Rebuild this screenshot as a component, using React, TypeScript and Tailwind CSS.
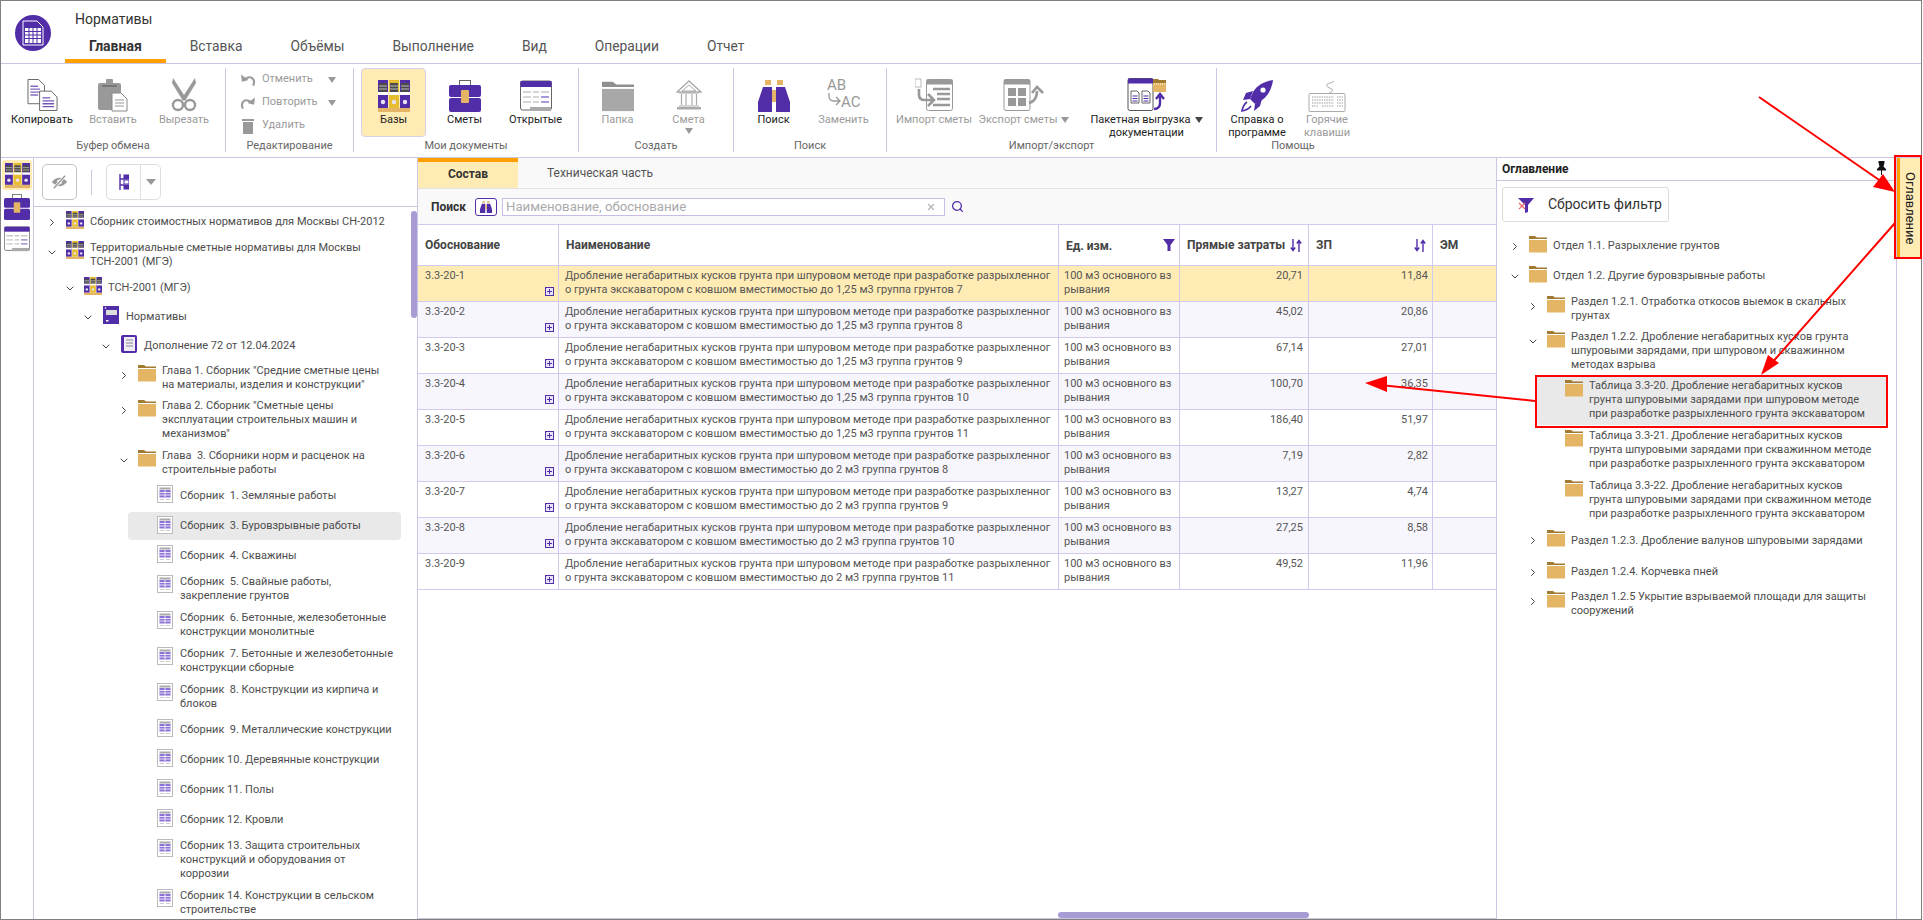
import { ChevronDown, ChevronRight, Search, X } from "lucide-react";

const PURPLE = "#512da8";
const GREY = "#999999";

function Binders({ s = 32 }: { s?: number }) {
  return (
    <svg width={s} height={s} viewBox="0 0 32 32">
      {[0, 11, 22].map((x, i) => (
        <g key={x}>
          <rect x={x} y="0" width="10" height="28" fill={i === 1 ? "#e6bd2e" : PURPLE} />
          <rect x={x + 1} y="3" width="8" height="9" fill="#4a4a4a" />
          <rect x={x + 1} y="5.5" width="8" height="1" fill="#bbbbbb" />
          <rect x={x + 1} y="8.5" width="8" height="1" fill="#bbbbbb" />
          <rect x={x} y="12" width="10" height="3" fill="#ffffff" />
          <circle cx={x + 5} cy="22" r="2.2" fill="#e9e4f5" />
        </g>
      ))}
      <rect x="0" y="28" width="32" height="4" fill="#e5b566" />
    </svg>
  );
}

function Briefcase({ s = 32 }: { s?: number }) {
  return (
    <svg width={s} height={s} viewBox="0 0 32 32">
      <rect x="10.5" y="0.5" width="11" height="6" fill="none" stroke="#666" />
      <rect x="0" y="5" width="32" height="12" rx="2" fill={PURPLE} />
      <rect x="0" y="18" width="32" height="14" rx="2" fill={PURPLE} />
      <rect x="12" y="10" width="8" height="13" rx="1" fill="#e5b566" />
    </svg>
  );
}

function Opened({ s = 32 }: { s?: number }) {
  return (
    <svg width={s} height={s} viewBox="0 0 32 32">
      <rect x="0.5" y="1" width="31" height="29" rx="2" fill="#fff" stroke="#666" />
      <rect x="0.5" y="1" width="31" height="6" fill={PURPLE} />
      <path d="M3 12h8M13 12h6M21 12h8M3 17h8M13 17h6M3 22h8M13 22h6" stroke="#c8c8c8" strokeWidth="1.6" />
      <path d="M21 17h8M21 22h8" stroke="#8f78cc" strokeWidth="1.6" />
      <rect x="10" y="27" width="21" height="4" fill="#aaa" />
    </svg>
  );
}

function Copy() {
  return (
    <svg width="31" height="34" viewBox="0 0 32 34">
      <path d="M1 1h11l6 6v19H1z" fill="#fff" stroke="#666" />
      <path d="M3.5 8h8M3.5 11h10M3.5 14h10M3.5 17h8" stroke={PURPLE} strokeWidth="1.4" opacity="0.7" />
      <path d="M13 13h12l6 6v14H13z" fill="#fff" stroke="#666" />
      <path d="M16 20h8M16 23h12M16 26h12M16 29h12" stroke={PURPLE} strokeWidth="1.4" opacity="0.8" />
    </svg>
  );
}

function Paste() {
  return (
    <svg width="30" height="34" viewBox="0 0 30 34">
      <rect x="0" y="5" width="23" height="27" rx="2" fill={GREY} />
      <rect x="8" y="1" width="7" height="7" rx="1" fill={GREY} />
      <rect x="4" y="7" width="15" height="2" fill="#777" />
      <path d="M14 15h9l6 6v12H14z" fill="#fff" stroke="#888" />
      <path d="M17 22h9M17 25h9M17 28h9" stroke="#bbb" strokeWidth="1.5" />
    </svg>
  );
}

function Scissors() {
  return (
    <svg width="26" height="34" viewBox="0 0 26 34">
      <path d="M2 0l13 20-3 3L1 5z" fill={GREY} />
      <path d="M24 0L11 20l3 3L25 5z" fill={GREY} />
      <circle cx="7" cy="27" r="5" fill="none" stroke={GREY} strokeWidth="2.4" />
      <circle cx="19" cy="27" r="5" fill="none" stroke={GREY} strokeWidth="2.4" />
    </svg>
  );
}

function Folder({ s = 18, color = "#e5b566", tab = "#a07a30" }: { s?: number; color?: string; tab?: string }) {
  return (
    <svg width={s} height={s} viewBox="0 0 18 18">
      <path d="M0 1h6l2 1.5h10V4H0z" fill={tab} />
      <rect x="0" y="5" width="18" height="12.5" fill={color} />
    </svg>
  );
}

function Bank() {
  return (
    <svg width="26" height="32" viewBox="0 0 26 32" fill="none" stroke="#aaaaaa">
      <path d="M13 1L1 12h24z" strokeWidth="1.4" />
      <path d="M13 5L6 11h14z" strokeWidth="1" />
      <path d="M3 13h20M3 26h20" strokeWidth="1.2" />
      <path d="M5.5 14v11M10 14v11M16 14v11M20.5 14v11" strokeWidth="1.2" />
      <rect x="1" y="27" width="24" height="2.5" fill="#aaaaaa" stroke="none" />
    </svg>
  );
}

function Binoculars({ s = 32 }: { s?: number }) {
  return (
    <svg width={s} height={s} viewBox="0 0 32 32">
      <rect x="7" y="0" width="6" height="5" fill="#e5b566" />
      <rect x="19" y="0" width="6" height="5" fill="#e5b566" />
      <path d="M5 7h9v25H0V22z" fill={PURPLE} />
      <path d="M27 7h-9v25h14V22z" fill={PURPLE} />
      <rect x="14" y="10" width="4" height="12" fill="#e5b566" />
    </svg>
  );
}

function Replace() {
  return (
    <svg width="34" height="36" viewBox="0 0 34 36">
      <text x="0" y="14" fontSize="15" fill={GREY} fontFamily="Roboto">AB</text>
      <text x="14" y="31" fontSize="15" fill={GREY} fontFamily="Roboto">AC</text>
      <path d="M2 17v3q0 5 5 5h6M9 21l4 4-4 4" fill="none" stroke={GREY} strokeWidth="1.3" />
    </svg>
  );
}

function ImportIcon() {
  return (
    <svg width="38" height="34" viewBox="0 0 38 34">
      <rect x="0" y="1" width="6" height="8" fill="#fff" stroke="#bbb" />
      <rect x="11.5" y="1.5" width="26" height="31" rx="2" fill="#fff" stroke={GREY} />
      <rect x="11.5" y="1.5" width="26" height="5" fill={GREY} />
      <path d="M18 11h17M22 16h13M22 21h13M18 27h17" stroke={GREY} strokeWidth="2.4" />
      <path d="M4 11v6q0 5 6 5h8M13 16l6 6-6 6" fill="none" stroke={GREY} strokeWidth="2.6" />
    </svg>
  );
}

function ExportIcon() {
  return (
    <svg width="42" height="34" viewBox="0 0 42 34">
      <rect x="1" y="1.5" width="26" height="31" rx="2" fill="#fff" stroke={GREY} />
      <rect x="1" y="1.5" width="26" height="5" fill={GREY} />
      <rect x="5" y="10" width="8" height="8" fill={GREY} />
      <rect x="15" y="10" width="8" height="8" fill={GREY} />
      <rect x="5" y="20" width="8" height="8" fill={GREY} />
      <rect x="15" y="20" width="8" height="8" fill={GREY} />
      <path d="M26 25q8-2 8-12M29 15l5-6 6 6" fill="none" stroke={GREY} strokeWidth="2.6" />
    </svg>
  );
}

function BatchIcon() {
  return (
    <svg width="40" height="34" viewBox="0 0 40 34">
      <rect x="1" y="0.5" width="25" height="32" rx="2" fill="#fff" stroke="#555" />
      <rect x="1" y="0.5" width="25" height="5" fill={PURPLE} />
      <path d="M4 13h6l2 2v10H4zM15 13h6l2 2v10h-8z" fill="#fff" stroke="#666" />
      <path d="M5.5 18h5M5.5 20.5h5M5.5 23h5M16.5 18h5M16.5 20.5h5M16.5 23h5" stroke={PURPLE} strokeWidth="1.2" />
      <path d="M26 1h5l1 1h7v3H26z" fill="#a07a30" />
      <rect x="26" y="5" width="13" height="9" fill="#e5b566" />
      <path d="M27 6h11" stroke="#fff" strokeDasharray="1 1" />
      <path d="M27 31q6 0 6-6v-7M29 21l4-5 4 5" fill="none" stroke={PURPLE} strokeWidth="2.4" />
    </svg>
  );
}

function Rocket() {
  return (
    <svg width="32" height="32" viewBox="0 0 32 32">
      <path d="M32 0C24 1 16 5 12 12l-3 7 5 5 7-4C27 16 31 8 32 0z" fill={PURPLE} />
      <path d="M12 11l-7 2-3 7 7-1zM21 19l-2 7-6 5 1-7z" fill={PURPLE} />
      <circle cx="22" cy="10" r="2.6" fill="#fff" />
      <path d="M6 22q-4 3-5 9q6-1 9-5" fill="none" stroke={PURPLE} strokeWidth="1.6" />
    </svg>
  );
}

function Keyboard() {
  return (
    <svg width="38" height="32" viewBox="0 0 38 32">
      <path d="M26 1c-3 3-9 2-7 5s7 2 5 5q-1 2-3 2" fill="none" stroke="#aaa" />
      <rect x="1" y="13.5" width="36" height="18" rx="1" fill="#fff" stroke="#aaa" />
      <path d="M4 17h22M4 20h22M4 23h22M4 26h6M14 26h12M29 17h6M29 20h6M29 23h6M29 26h6" stroke="#bbb" strokeWidth="1.6" strokeDasharray="1.4 1" />
    </svg>
  );
}

function SortArrows() {
  return (
    <svg width="12" height="13" viewBox="0 0 12 13" fill="none" stroke={PURPLE} strokeWidth="1.4">
      <path d="M3 0v11M0.8 8.5L3 11.5l2.2-3" />
      <path d="M9 13V2M6.8 4.5L9 1.5l2.2 3" />
    </svg>
  );
}

function Tri({ c = GREY }: { c?: string }) {
  return <span className="inline-block w-0 h-0 border-l-[4.5px] border-r-[4.5px] border-t-[6px] border-l-transparent border-r-transparent" style={{ borderTopColor: c }} />;
}

function DocLines() {
  return (
    <svg width="16" height="18" viewBox="0 0 16 18">
      <rect x="0.5" y="0.5" width="15" height="17" fill="#fff" stroke="#bbb" />
      <rect x="2.5" y="2.5" width="11" height="2" fill="#aaa" />
      <rect x="2.5" y="5" width="11" height="7.5" fill="#8c72d6" />
      <path d="M2.5 7.5h11M2.5 10h11M8 5v7.5" stroke="#fff" strokeWidth="0.8" />
      <path d="M3 14.5h4M9 14.5h4" stroke="#ccc" />
    </svg>
  );
}

function BookIcon() {
  return (
    <svg width="16" height="18" viewBox="0 0 16 18">
      <rect x="0" y="0" width="16" height="18" rx="2" fill={PURPLE} />
      <rect x="3" y="2" width="11" height="14" fill="#efecf8" />
      <path d="M5 5h7M5 8h7M5 11h7" stroke="#888" strokeWidth="1.2" />
    </svg>
  );
}

function ServerIcon() {
  return (
    <svg width="16" height="18" viewBox="0 0 16 18">
      <rect x="0" y="0" width="16" height="18" fill={PURPLE} />
      <rect x="3" y="4" width="11" height="5" fill="#ddd" />
      <circle cx="2.5" cy="2" r="0.8" fill="#fff" />
      <rect x="3" y="14" width="2.5" height="1.5" fill="#fff" />
    </svg>
  );
}

type IconKind = "binders" | "server" | "book" | "folder" | "doc";
type Node = { level: number; open?: boolean; icon: IconKind; h: number; lines: string[]; sel?: boolean; mt?: number };

function TreeIcon({ kind }: { kind: IconKind }) {
  if (kind === "binders") return <Binders s={18} />;
  if (kind === "server") return <ServerIcon />;
  if (kind === "book") return <BookIcon />;
  if (kind === "folder") return <Folder />;
  return <DocLines />;
}

function TreeRow({ n, hlLeft, hlRightClass }: { n: Node; hlLeft: number; hlRightClass: string }) {
  const pad = 12 + 18 * n.level;
  return (
    <div
      className={"flex items-start shrink-0 " + (n.sel ? "bg-[#e9e9e9] rounded-sm " + hlRightClass : "")}
      style={{ height: n.h, paddingLeft: n.sel ? pad - hlLeft : pad, marginLeft: n.sel ? hlLeft : 0, marginTop: n.mt ?? 0 }}
    >
      <div className="w-[12px] h-[14px] mt-[8px] flex items-center justify-center text-[#444] shrink-0">
        {n.open === true && <ChevronDown size={13} strokeWidth={2} />}
        {n.open === false && <ChevronRight size={13} strokeWidth={2} />}
      </div>
      <div className="w-[18px] h-[18px] ml-[8px] mt-[4px] flex justify-center shrink-0">
        <TreeIcon kind={n.icon} />
      </div>
      <div className="ml-[6px] self-stretch flex flex-col justify-center text-[11px] leading-[14px] text-[#4d4d4d] whitespace-pre">
        {n.lines.map((l) => (
          <div key={l}>{l}</div>
        ))}
      </div>
    </div>
  );
}

const leftTree: Node[] = [
  { level: 0, open: false, icon: "binders", h: 30, lines: ["Сборник стоимостных нормативов для Москвы СН-2012"] },
  { level: 0, open: true, icon: "binders", h: 36, lines: ["Территориальные сметные нормативы для Москвы", "ТСН-2001 (МГЭ)"] },
  { level: 1, open: true, icon: "binders", h: 29, lines: ["ТСН-2001 (МГЭ)"] },
  { level: 2, open: true, icon: "server", h: 29, lines: ["Нормативы"] },
  { level: 3, open: true, icon: "book", h: 29, lines: ["Дополнение 72 от 12.04.2024"] },
  { level: 4, open: false, icon: "folder", h: 35, lines: ['Глава 1. Сборник "Средние сметные цены', 'на материалы, изделия и конструкции"'] },
  { level: 4, open: false, icon: "folder", h: 50, lines: ['Глава 2. Сборник "Сметные цены', "эксплуатации строительных машин и", 'механизмов"'] },
  { level: 4, open: true, icon: "folder", h: 36, lines: ["Глава  3. Сборники норм и расценок на", "строительные работы"] },
  { level: 5, icon: "doc", h: 29, lines: ["Сборник  1. Земляные работы"] },
  { level: 5, icon: "doc", h: 28, mt: 2, sel: true, lines: ["Сборник  3. Буровзрывные работы"] },
  { level: 5, icon: "doc", h: 30, mt: 1, lines: ["Сборник  4. Скважины"] },
  { level: 5, icon: "doc", h: 36, lines: ["Сборник  5. Свайные работы,", "закрепление грунтов"] },
  { level: 5, icon: "doc", h: 36, lines: ["Сборник  6. Бетонные, железобетонные", "конструкции монолитные"] },
  { level: 5, icon: "doc", h: 36, lines: ["Сборник  7. Бетонные и железобетонные", "конструкции сборные"] },
  { level: 5, icon: "doc", h: 36, lines: ["Сборник  8. Конструкции из кирпича и", "блоков"] },
  { level: 5, icon: "doc", h: 30, lines: ["Сборник  9. Металлические конструкции"] },
  { level: 5, icon: "doc", h: 30, lines: ["Сборник 10. Деревянные конструкции"] },
  { level: 5, icon: "doc", h: 30, lines: ["Сборник 11. Полы"] },
  { level: 5, icon: "doc", h: 30, lines: ["Сборник 12. Кровли"] },
  { level: 5, icon: "doc", h: 50, lines: ["Сборник 13. Защита строительных", "конструкций и оборудования от", "коррозии"] },
  { level: 5, icon: "doc", h: 36, lines: ["Сборник 14. Конструкции в сельском", "строительстве"] },
];

const rightTree: Node[] = [
  { level: 0, open: false, icon: "folder", h: 30, lines: ["Отдел 1.1. Разрыхление грунтов"] },
  { level: 0, open: true, icon: "folder", h: 30, lines: ["Отдел 1.2. Другие буровзрывные работы"] },
  { level: 1, open: false, icon: "folder", h: 35, lines: ["Раздел 1.2.1. Отработка откосов выемок в скальных", "грунтах"] },
  { level: 1, open: true, icon: "folder", h: 49, lines: ["Раздел 1.2.2. Дробление негабаритных кусков грунта", "шпуровыми зарядами, при шпуровом и скважинном", "методах взрыва"] },
  { level: 2, icon: "folder", h: 50, sel: true, lines: ["Таблица 3.3-20. Дробление негабаритных кусков", "грунта шпуровыми зарядами при шпуровом методе", "при разработке разрыхленного грунта экскаватором"] },
  { level: 2, icon: "folder", h: 50, lines: ["Таблица 3.3-21. Дробление негабаритных кусков", "грунта шпуровыми зарядами при скважинном методе", "при разработке разрыхленного грунта экскаватором"] },
  { level: 2, icon: "folder", h: 50, lines: ["Таблица 3.3-22. Дробление негабаритных кусков", "грунта шпуровыми зарядами при скважинном методе", "при разработке разрыхленного грунта экскаватором"] },
  { level: 1, open: false, icon: "folder", h: 32, lines: ["Раздел 1.2.3. Дробление валунов шпуровыми зарядами"] },
  { level: 1, open: false, icon: "folder", h: 29, lines: ["Раздел 1.2.4. Корчевка пней"] },
  { level: 1, open: false, icon: "folder", h: 36, lines: ["Раздел 1.2.5 Укрытие взрываемой площади для защиты", "сооружений"] },
];

const rows = [
  ["3.3-20-1", "1,25", "7", "20,71", "11,84"],
  ["3.3-20-2", "1,25", "8", "45,02", "20,86"],
  ["3.3-20-3", "1,25", "9", "67,14", "27,01"],
  ["3.3-20-4", "1,25", "10", "100,70", "36,35"],
  ["3.3-20-5", "1,25", "11", "186,40", "51,97"],
  ["3.3-20-6", "2", "8", "7,19", "2,82"],
  ["3.3-20-7", "2", "9", "13,27", "4,74"],
  ["3.3-20-8", "2", "10", "27,25", "8,58"],
  ["3.3-20-9", "2", "11", "49,52", "11,96"],
];

function RibbonBtn({ w, label, label2, dis, active, icon, tri, below }: { w: number; label: string; label2?: string; dis?: boolean; active?: boolean; icon: React.ReactNode; tri?: boolean; below?: boolean }) {
  return (
    <div
      className={"h-[69px] pt-[11px] flex flex-col items-center shrink-0 border rounded-[4px] " + (active ? "bg-[#ffebb4] border-[#d9cfe8]" : "border-transparent")}
      style={{ width: w }}
    >
      <div className="h-[32px] flex items-end justify-center">{icon}</div>
      <div className={"text-[11px] leading-[13px] text-center whitespace-nowrap mt-[1px] " + (dis ? "text-[#9a9a9a]" : "text-[#222]")}>
        {label}
        {tri && <span className="ml-[4px] align-middle inline-flex"><Tri c={dis ? GREY : "#444"} /></span>}
        {label2 && <div>{label2}</div>}
        {below && <div className="flex justify-center mt-[2px]"><Tri /></div>}
      </div>
    </div>
  );
}

function Group({ w, label, pl, gap, children }: { w: number; label: string; pl?: number; gap?: number; children: React.ReactNode }) {
  return (
    <div className="h-[84px] mt-[4px] flex flex-col border-r border-[#cdc6e2] shrink-0" style={{ width: w }}>
      <div className="h-[69px] flex" style={{ paddingLeft: pl ?? 0, gap: gap ?? 0 }}>
        {children}
      </div>
      <div className="h-[14px] mt-[2px] text-[11px] leading-[14px] text-center text-[#666]">{label}</div>
    </div>
  );
}

function EditRow({ icon, label, tri }: { icon: React.ReactNode; label: string; tri?: boolean }) {
  return (
    <div className="h-[23px] flex items-center pl-[15px]">
      <div className="w-[14px] flex justify-center">{icon}</div>
      <div className="ml-[7px] w-[66px] text-[11px] text-[#9a9a9a]">{label}</div>
      {tri && <Tri />}
    </div>
  );
}

const thCls = "h-full border-r border-[#d2c9ee] flex items-center shrink-0 font-bold text-[#444] text-[12px] relative";

export default function App() {
  return (
    <div className="relative w-[1923px] h-[920px] bg-white overflow-hidden [font-family:Roboto,sans-serif]">
      <div className="w-[1922px] h-[920px] flex flex-col border border-[#808080]">
        {/* шапка */}
        <div className="h-[62px] flex shrink-0 border-b border-[#cdc6e2] box-content">
          <div className="w-[64px] pl-[14px] pt-[14px] shrink-0">
            <svg width="36" height="36" viewBox="0 0 36 36">
              <circle cx="18" cy="18" r="18" fill={PURPLE} />
              <path d="M8 6h14l6 6v18H8z" fill="none" stroke="#fff" strokeWidth="1" />
              <path d="M10 13h16v15H10z" fill="#fff" />
              <path d="M10 16.5h16M10 20h16M10 23.5h16M14 13v15M18 13v15M22 13v15" stroke={PURPLE} strokeWidth="1" />
            </svg>
          </div>
          <div className="flex flex-col">
            <div className="h-[33px] pt-[3px] pl-[10px] flex items-center text-[14px] text-[#333]">Нормативы</div>
            <div className="flex h-[29px]">
              <div className="px-6 border-b-4 border-[#ff9f00] flex items-center text-[14px] font-bold text-[#333]">Главная</div>
              {["Вставка", "Объёмы", "Выполнение", "Вид", "Операции", "Отчет"].map((t) => (
                <div key={t} className="px-6 pb-1 flex items-center text-[13.8px] text-[#555]">{t}</div>
              ))}
            </div>
          </div>
        </div>

        {/* лента */}
        <div className="h-[93px] flex shrink-0 border-b border-[#cdc6e2] box-content">
          <Group w={225} label="Буфер обмена" pl={6}>
            <RibbonBtn w={70} label="Копировать" icon={<Copy />} />
            <RibbonBtn w={72} label="Вставить" dis icon={<Paste />} />
            <RibbonBtn w={70} label="Вырезать" dis icon={<Scissors />} />
          </Group>
          <Group w={128} label="Редактирование">
            <div>
              <EditRow label="Отменить" tri icon={<svg width="15" height="14" viewBox="0 0 15 14"><path d="M4 6Q10 2 13 6Q15 9 13 13" fill="none" stroke={GREY} strokeWidth="2.2" /><path d="M0 1L1 9L8 7z" fill={GREY} /></svg>} />
              <EditRow label="Повторить" tri icon={<svg width="15" height="14" viewBox="0 0 15 14"><path d="M11 6Q5 2 2 6Q0 9 2 13" fill="none" stroke={GREY} strokeWidth="2.2" /><path d="M15 1L14 9L7 7z" fill={GREY} /></svg>} />
              <EditRow label="Удалить" icon={<svg width="12" height="16" viewBox="0 0 12 16"><rect x="0" y="1" width="12" height="2" fill={GREY} /><rect x="1" y="4" width="10" height="12" fill={GREY} /></svg>} />
            </div>
          </Group>
          <Group w={225} label="Мои документы" pl={7} gap={6}>
            <RibbonBtn w={65} label="Базы" active icon={<Binders />} />
            <RibbonBtn w={65} label="Сметы" icon={<Briefcase />} />
            <RibbonBtn w={65} label="Открытые" icon={<Opened />} />
          </Group>
          <Group w={155} label="Создать" pl={6} gap={6}>
            <RibbonBtn w={65} label="Папка" dis icon={<Folder s={32} color="#a8a8a8" tab="#8f8f8f" />} />
            <RibbonBtn w={65} label="Смета" dis below icon={<Bank />} />
          </Group>
          <Group w={153} label="Поиск" pl={7} gap={5}>
            <RibbonBtn w={65} label="Поиск" icon={<Binoculars />} />
            <RibbonBtn w={65} label="Заменить" dis icon={<Replace />} />
          </Group>
          <Group w={330} label="Импорт/экспорт" pl={2}>
            <RibbonBtn w={90} label="Импорт сметы" dis icon={<ImportIcon />} />
            <RibbonBtn w={90} label="Экспорт сметы" dis tri icon={<ExportIcon />} />
            <div className="w-[16px]" />
            <RibbonBtn w={123} label="Пакетная выгрузка" label2="документации" tri icon={<BatchIcon />} />
          </Group>
          <div className="h-[84px] mt-[4px] w-[152px] flex flex-col shrink-0">
            <div className="h-[69px] flex pl-[5px] gap-[5px]">
              <RibbonBtn w={70} label="Справка о" label2="программе" icon={<Rocket />} />
              <RibbonBtn w={60} label="Горячие" label2="клавиши" dis icon={<Keyboard />} />
            </div>
            <div className="h-[14px] mt-[2px] text-[11px] leading-[14px] text-center text-[#666]">Помощь</div>
          </div>
        </div>

        <div className="flex flex-1 min-h-0">
          {/* левая полоса */}
          <div className="w-[33px] shrink-0 border-r border-[#cdc6e2] flex flex-col items-center pt-[2px]">
            <div className="w-[30px] h-[30px] bg-[#ffebb4] rounded-[3px] flex items-center justify-center"><Binders s={25} /></div>
            <div className="mt-[4px]"><Briefcase s={26} /></div>
            <div className="mt-[6px]"><Opened s={26} /></div>
          </div>

          {/* дерево */}
          <div className="relative w-[384px] shrink-0 border-r border-[#cdc6e2] flex flex-col overflow-hidden">
            <div className="h-[48px] shrink-0 border-b border-[#cdc6e2] flex items-center pl-[8px] box-content">
              <div className="w-[35px] h-[36px] border border-[#c4c4c4] rounded-[5px] flex items-center justify-center">
                <svg width="17" height="14" viewBox="0 0 24 20">
                  <path d="M1 10q11-12 22 0q-11 12-22 0z" fill={GREY} />
                  <circle cx="12" cy="10" r="3.5" fill="#fff" />
                  <path d="M4 19L20 1" stroke="#fff" strokeWidth="4" />
                  <path d="M4 19L20 1" stroke={GREY} strokeWidth="2" />
                </svg>
              </div>
              <div className="w-px h-[25px] bg-[#cdc6e2] ml-[14px]" />
              <div className="ml-[14px] w-[55px] h-[36px] border border-[#dedede] rounded-[5px] flex">
                <div className="w-[34px] border-r border-[#dedede] flex items-center justify-center">
                  <svg width="10" height="16" viewBox="0 0 10 16" fill="none" stroke={PURPLE}>
                    <path d="M1 0v16M1 5h4M1 11h4" strokeWidth="1.4" />
                    <rect x="5" y="1" width="5" height="4" fill={PURPLE} />
                    <rect x="5" y="6" width="5" height="4" />
                    <rect x="5" y="11" width="5" height="4" fill={PURPLE} />
                  </svg>
                </div>
                <div className="flex-1 flex items-center justify-center"><span className="inline-block w-0 h-0 border-l-[5px] border-r-[5px] border-t-[6px] border-l-transparent border-r-transparent border-t-[#999]" /></div>
              </div>
            </div>
            <div className="flex flex-col flex-1 min-h-0">
              {leftTree.map((n) => (
                <TreeRow key={n.lines[0]} n={n} hlLeft={94} hlRightClass="mr-[16px]" />
              ))}
            </div>
            <div className="absolute right-[0px] top-[53px] w-[6px] h-[107px] rounded bg-[#a99bd3]" />
          </div>

          {/* центр */}
          <div className="relative w-[1078px] shrink-0 flex flex-col">
            <div className="h-[30px] shrink-0 bg-[#f9f9f9] border-b border-[#e2e2e2] flex box-content">
              <div className="w-[100px] bg-[#ffebb4] border-t-4 border-[#ff9f00] pb-[2px] flex items-center justify-center text-[12px] font-bold text-[#333]">Состав</div>
              <div className="w-[164px] flex items-center justify-center text-[12px] text-[#555]">Техническая часть</div>
            </div>
            <div className="h-[35px] shrink-0 bg-[#f9f9f9] flex items-center pl-[13px]">
              <div className="w-[34px] text-[12px] font-bold text-[#333]">Поиск</div>
              <div className="ml-[10px] w-[22px] h-[18px] border border-[#512da8] rounded-[3px] flex items-center justify-center bg-white">
                <Binoculars s={12} />
              </div>
              <div className="ml-[5px] w-[443px] h-[18px] border border-[#c9bde8] bg-white flex items-center px-[3px]">
                <div className="flex-1 text-[13.2px] text-[#aaa]">Наименование, обоснование</div>
                <X size={10} strokeWidth={3.5} color="#bbb" className="mr-[5px]" />
              </div>
              <Search size={13} strokeWidth={2.4} color={PURPLE} className="ml-[6px]" />
            </div>
            <div className="h-[42px] shrink-0 bg-white border-y border-[#d2c9ee] flex">
              <div className={thCls + " w-[141px] pl-[7px]"}>Обоснование</div>
              <div className={thCls + " w-[500px] pl-[7px]"}>Наименование</div>
              <div className={thCls + " w-[121px] pl-[7px] pt-[2px]"}>
                Ед. изм.
                <svg width="12" height="12" viewBox="0 0 12 12" className="absolute right-[4px] top-[14px]"><path d="M0 0h12L7.5 6v6h-3V6z" fill={PURPLE} /></svg>
              </div>
              <div className={thCls + " w-[129px] pl-[7px]"}>
                Прямые затраты
                <span className="absolute right-[6px] top-[14px] flex"><SortArrows /></span>
              </div>
              <div className={thCls + " w-[124px] pl-[7px]"}>
                ЗП
                <span className="absolute right-[6px] top-[14px] flex"><SortArrows /></span>
              </div>
              <div className="h-full flex items-center flex-1 font-bold text-[#444] text-[12px] pl-[7px]">ЭМ</div>
            </div>
            {rows.map((r, i) => (
              <div
                key={r[0]}
                className={"h-[36px] shrink-0 flex border-b border-[#d2c9ee] text-[11px] leading-[14px] text-[#555] " + (i === 0 ? "bg-[#ffebb4]" : i % 2 === 1 ? "bg-[#f7f6fd]" : "bg-white")}
              >
                <div className="relative w-[141px] shrink-0 border-r border-[#d2c9ee] pl-[7px] pt-[3px]">
                  {r[0]}
                  <span className="absolute right-[4px] bottom-[5px] w-[9px] h-[9px] border border-[#512da8] bg-[#e9e4f5] flex items-center justify-center">
                    <svg width="7" height="7" viewBox="0 0 7 7"><path d="M3.5 1v5M1 3.5h5" stroke={PURPLE} /></svg>
                  </span>
                </div>
                <div className="w-[500px] shrink-0 border-r border-[#d2c9ee] pl-[6px] pt-[3px] whitespace-nowrap overflow-hidden">
                  <div>Дробление негабаритных кусков грунта при шпуровом методе при разработке разрыхленног</div>
                  <div>о грунта экскаватором с ковшом вместимостью до {r[1]} м3 группа грунтов {r[2]}</div>
                </div>
                <div className="w-[121px] shrink-0 border-r border-[#d2c9ee] pl-[5px] pt-[3px] whitespace-nowrap">
                  <div>100 м3 основного вз</div>
                  <div>рывания</div>
                </div>
                <div className="w-[129px] shrink-0 border-r border-[#d2c9ee] pr-[5px] pt-[3px] text-right">{r[3]}</div>
                <div className="w-[124px] shrink-0 border-r border-[#d2c9ee] pr-[4px] pt-[3px] text-right">{r[4]}</div>
                <div className="flex-1" />
              </div>
            ))}
            <div className="absolute left-[640px] bottom-[1px] w-[251px] h-[6px] rounded bg-[#a99bd3]" />
            <div className="absolute left-0 right-0 bottom-0 h-px bg-[#cdc6e2]" />
          </div>

          {/* оглавление */}
          <div className="w-[401px] shrink-0 border-x border-[#cdc6e2] flex flex-col">
            <div className="relative h-[22px] shrink-0 border-b border-[#cdc6e2] flex items-center pl-[5px] text-[12px] font-bold text-[#222] box-content">
              Оглавление
              <svg width="11" height="14" viewBox="0 0 11 14" className="absolute right-[9px] top-[3px]">
                <path d="M2.5 0h6v1.5L7.5 5.5 10 8v1.5H1V8l2.5-2.5-1-4zM5 9.5h1V14H5z" fill="#111" />
              </svg>
            </div>
            <div className="mt-[6px] ml-[5px] mb-[9px] w-[167px] h-[35px] shrink-0 border border-[#dcdcdc] rounded-[3px] flex items-center pl-[15px]">
              <svg width="16" height="16" viewBox="0 0 16 16">
                <path d="M0 1h16l-6 7v7l-3 1V8z" fill={PURPLE} />
                <path d="M1 6l6 6M7 6l-6 6" stroke="#e66" strokeWidth="1.2" />
              </svg>
              <span className="ml-[14px] text-[14px] text-[#333]">Сбросить фильтр</span>
            </div>
            {rightTree.map((n) => (
              <TreeRow key={n.lines[0]} n={n} hlLeft={40} hlRightClass="mr-[10px]" />
            ))}
          </div>

          {/* правая полоса */}
          <div className="flex-1">
            <div className="h-[100px] bg-[#ffebb4] border-l-[3px] border-[#ff9f00] flex items-center justify-center text-[13px] text-[#222] [writing-mode:vertical-rl]">Оглавление</div>
          </div>
        </div>
      </div>

      {/* пометки поверх снимка */}
      <svg className="absolute inset-0 pointer-events-none" width="1923" height="920">
        <g fill="none" stroke="#f00" strokeWidth="2">
          <rect x="1895" y="156" width="26" height="102" />
          <rect x="1536" y="376" width="351" height="51" />
          <path d="M1759 97L1885 184M1895 223L1770 365M1535 401L1380 385" />
        </g>
        <g fill="#f00">
          <path d="M1895 192L1873 187L1883 174z" />
          <path d="M1761 375L1779 363L1768 355z" />
          <path d="M1365 383L1387 376L1387 392z" />
        </g>
      </svg>
    </div>
  );
}
